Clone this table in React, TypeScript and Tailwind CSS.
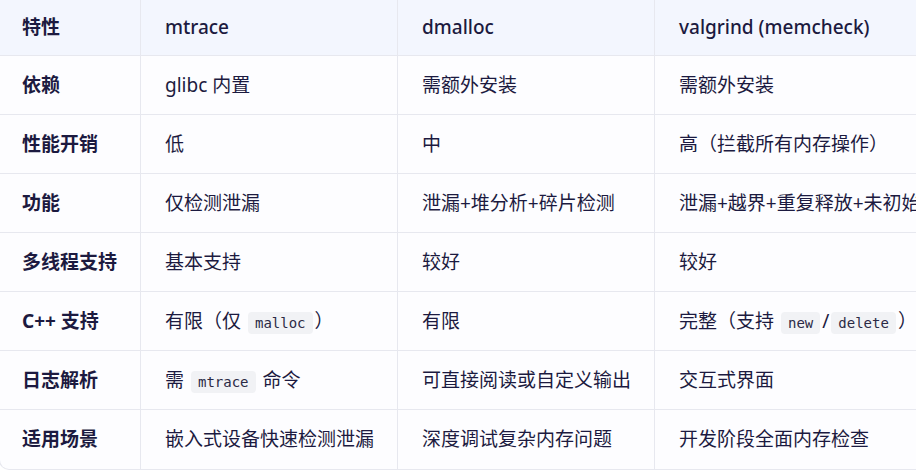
import type { ReactNode } from "react";

type Cell = ReactNode;

function Code({ children }: { children: ReactNode }) {
  return (
    <code className="mx-[2px] rounded-[4px] bg-[#f1f2f5] px-[7px] py-[3px] font-['DejaVu_Sans_Mono',monospace] text-[14px] text-[#2b2a45]">
      {children}
    </code>
  );
}

const header = ["特性", "mtrace", "dmalloc", "valgrind (memcheck)"];

const rows: Cell[][] = [
  ["依赖", "glibc 内置", "需额外安装", "需额外安装"],
  ["性能开销", "低", "中", "高（拦截所有内存操作）"],
  ["功能", "仅检测泄漏", "泄漏+堆分析+碎片检测", "泄漏+越界+重复释放+未初始化内存"],
  ["多线程支持", "基本支持", "较好", "较好"],
  [
    "C++ 支持",
    <>
      有限（仅 <Code>malloc</Code>）
    </>,
    "有限",
    <>
      完整（支持 <Code>new</Code>/<Code>delete</Code>）
    </>,
  ],
  [
    "日志解析",
    <>
      需 <Code>mtrace</Code> 命令
    </>,
    "可直接阅读或自定义输出",
    "交互式界面",
  ],
  ["适用场景", "嵌入式设备快速检测泄漏", "深度调试复杂内存问题", "开发阶段全面内存检查"],
];

const cols = "grid grid-cols-[141px_257px_257px_340px]";

export default function App() {
  return (
    <div className="h-[472px] w-[916px] overflow-hidden bg-white font-['Noto_Sans','Noto_Sans_CJK_SC',sans-serif] text-[19px] text-[#1c1a40]">
      <div className="ml-[-1px] w-[996px] overflow-hidden rounded-b-[10px] border-x border-b border-[#e7e8ef] bg-[#fdfdff]">
        <div className={`${cols} bg-[#f3f6fe]`}>
          {header.map((h, i) => (
            <div
              key={h}
              className={`flex h-[56px] items-center whitespace-nowrap border-b border-r border-[#e7e8ef] ${
                i === 0 ? "pl-[22px] font-bold" : "pl-6 font-medium"
              }`}
            >
              {h}
            </div>
          ))}
        </div>
        {rows.map((row, r) => (
          <div key={r} className={cols}>
            {row.map((c, i) => (
              <div
                key={i}
                className={`flex h-[59px] items-center whitespace-nowrap border-r border-[#e7e8ef] ${
                  r < rows.length - 1 ? "border-b" : ""
                } ${i === 0 ? "pl-[22px] font-bold" : "pl-6"}`}
              >
                <span>{c}</span>
              </div>
            ))}
          </div>
        ))}
      </div>
    </div>
  );
}
